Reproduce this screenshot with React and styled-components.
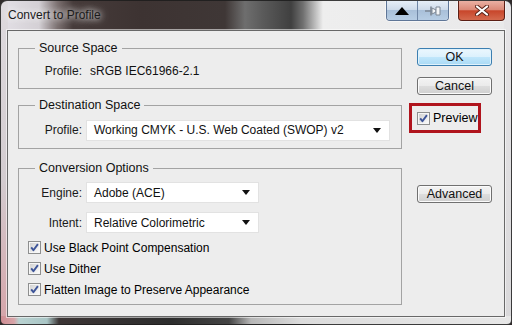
import React from "react";
import styled, { createGlobalStyle } from "styled-components";

const GlobalStyle = createGlobalStyle`
  html, body {
    margin: 0;
    padding: 0;
    background: #2f2a2a;
  }
  body {
    width: 512px;
    height: 325px;
    overflow: hidden;
    font-family: "Liberation Sans", Arial, sans-serif;
    font-size: 12px;
    color: #000;
  }
`;

const Window = styled.div`
  box-sizing: border-box;
  width: 512px;
  height: 325px;
  display: flex;
  flex-direction: column;
  border: 1px solid rgba(28, 28, 28, 0.85);
  border-radius: 7px 7px 5px 5px;
  overflow: hidden;
  background:
    linear-gradient(90deg, #cf8e94 0, #d8a4a8 13px, #b9d2d1 18px, #a9c5c5 46px, #3c3535 58px, #2d2d2d 170px, #444 228px, #b7b7b7 250px, #dcdcdc 300px, #e7e7e7 100%) left bottom / 100% 8px no-repeat,
    linear-gradient(180deg, #dedade 0, #d3ccd0 55%, #d5a3a8 100%) left top / 7px 100% no-repeat,
    linear-gradient(180deg, #e6e5e7, #d9d8da) right top / 7px 100% no-repeat,
    linear-gradient(90deg, #e3e0e6 0, #d4d0d5 38px, #7d7272 56px, #463b3a 72px, #3d3332 140px, #3f3736 224px, #6e6e6e 244px, #5a5a5a 262px, #404040 290px, #707070 302px, #eeeeee 322px, #e9e9ea 100%);
`;

const TitleBar = styled.div`
  height: 29px;
  flex: none;
  display: flex;
  align-items: flex-start;
  padding-left: 7px;
  padding-right: 6px;
`;

const Title = styled.div`
  margin-top: 6px;
  font-size: 12px;
  line-height: 16px;
  color: #1b1b1b;
  text-shadow: 0 0 6px rgba(255, 255, 255, 0.95), 0 0 10px rgba(255, 255, 255, 0.8);
`;

const CaptionGroup = styled.div`
  margin-left: auto;
  display: flex;
  border: 1px solid #5f7697;
  border-top: none;
  border-radius: 0 0 4px 4px;
  overflow: hidden;
  box-shadow: 0 0 0 1px rgba(255, 255, 255, 0.5);
`;

const CaptionButton = styled.div`
  width: 30px;
  height: 19px;
  display: flex;
  align-items: center;
  justify-content: center;
  background: linear-gradient(180deg, #e6eef7 0, #cedbea 45%, #a9c0d9 50%, #b7cde4 100%);
  & + & {
    border-left: 1px solid #6f86a5;
  }
`;

const CloseButton = styled.div`
  width: 45px;
  height: 19px;
  margin-left: 9px;
  display: flex;
  align-items: center;
  justify-content: center;
  border: 1px solid #5b1e14;
  border-top: none;
  border-radius: 0 0 4px 4px;
  background: linear-gradient(180deg, #eab0a3 0, #dc8a78 45%, #c8462b 52%, #d46a4e 100%);
  box-shadow: 0 0 0 1px rgba(255, 255, 255, 0.45);
`;

const Client = styled.div`
  flex: 1;
  margin: 0 6px 7px 6px;
  border: 1px solid #686868;
  box-shadow: 0 0 0 1px rgba(255, 255, 255, 0.55);
  background: #ededed;
  display: flex;
  padding: 10px 12px 0 10px;
  gap: 15px;
`;

const LeftColumn = styled.div`
  width: 384px;
  display: flex;
  flex-direction: column;
`;

const RightColumn = styled.div`
  width: 75px;
  display: flex;
  flex-direction: column;
`;

const Group = styled.fieldset`
  margin: ${(p) => p.$top || 0}px 0 0 0;
  padding: ${(p) => p.$pad || "6px 0 7px 0"};
  border: 1px solid #a3a3a3;
  min-width: 0;
  display: flex;
  flex-direction: column;
`;

const Legend = styled.legend`
  margin-left: 16px;
  padding: 0 4px;
  font-size: 12.5px;
  line-height: 14px;
  color: #111;
`;

const Row = styled.div`
  display: flex;
  align-items: center;
  height: ${(p) => p.$h || 21}px;
  margin-top: ${(p) => p.$mt || 0}px;
  gap: 4px;
`;

const Label = styled.div`
  width: 63px;
  text-align: right;
  color: #1a1a1a;
  white-space: nowrap;
`;

const Value = styled.div`
  padding-left: 4px;
  color: #111;
`;

const Dropdown = styled.div`
  box-sizing: border-box;
  width: ${(p) => p.$w}px;
  height: 21px;
  background: #fff;
  border: 1px solid #e2e2e2;
  display: flex;
  align-items: center;
  justify-content: space-between;
  padding: 0 8px 0 7px;
  color: #111;
  white-space: nowrap;
`;

const CheckRow = styled.div`
  display: flex;
  align-items: center;
  height: 21px;
  padding-left: 9px;
  gap: 3px;
  margin-top: ${(p) => p.$mt || 0}px;
  white-space: nowrap;
`;

const Button = styled.div`
  box-sizing: border-box;
  height: 18px;
  margin-top: ${(p) => p.$mt || 0}px;
  display: flex;
  align-items: center;
  justify-content: center;
  border: 1px solid ${(p) => (p.$primary ? "#3c7fb1" : "#707070")};
  border-radius: 3px;
  box-shadow: inset 0 0 0 1px ${(p) => (p.$primary ? "#dff2fc" : "#fbfbfb")};
  background: ${(p) =>
    p.$primary
      ? "linear-gradient(180deg, #ebf7fe 0, #dcf1fd 48%, #c0e6fb 52%, #a9daf5 100%)"
      : "linear-gradient(180deg, #f3f3f3 0, #ebebeb 48%, #dddddd 52%, #cfcfcf 100%)"};
  font-size: 12.5px;
  color: #111;
`;

const Highlight = styled.div`
  box-sizing: border-box;
  width: 72px;
  height: 30px;
  margin: 8px 0 0 -8px;
  border: 3px solid #b0141d;
  display: flex;
  align-items: center;
  padding-left: 5px;
  gap: 3px;
  font-size: 12.5px;
`;

const Arrow = () => (
  <svg width="8" height="5" viewBox="0 0 8 5">
    <path d="M0 0 H8 L4 5 Z" fill="#111" />
  </svg>
);

const Check = () => (
  <svg width="13" height="13" viewBox="0 0 13 13" style={{ flex: "none" }}>
    <defs>
      <linearGradient id="cbfill" x1="0" y1="0" x2="1" y2="1">
        <stop offset="0" stopColor="#d2d2d2" />
        <stop offset="1" stopColor="#fbfbfb" />
      </linearGradient>
    </defs>
    <rect x="0.5" y="0.5" width="12" height="12" fill="#f6f6f6" stroke="#8e8f8f" />
    <rect x="2" y="2" width="9" height="9" fill="url(#cbfill)" />
    <path d="M3.2 6.4 L5.4 9.2 L9.9 3.1" fill="none" stroke="#3d5498" strokeWidth="1.9" strokeLinejoin="round" />
  </svg>
);

const UpIcon = () => (
  <svg width="14" height="8" viewBox="0 0 14 8">
    <path d="M0 8 L7 0 L14 8 Z" fill="#000" />
  </svg>
);

const PinIcon = () => (
  <svg width="18" height="12" viewBox="0 0 18 12">
    <path d="M1 6 H7" stroke="#7d8794" strokeWidth="1.4" />
    <path d="M7 1.5 V10.5" stroke="#7d8794" strokeWidth="1.6" />
    <path d="M8 3 L12 5 L12 7 L8 9 Z" fill="#f4f6f8" stroke="#7d8794" strokeWidth="1" />
    <path d="M12 2 L16 2 L16 10 L12 10 Z" fill="#f4f6f8" stroke="#7d8794" strokeWidth="1" />
  </svg>
);

const CloseIcon = () => (
  <svg width="14" height="11" viewBox="0 0 14 11">
    <path d="M2 1.5 L12 9.5 M12 1.5 L2 9.5" stroke="#5a2318" strokeWidth="4" strokeLinecap="round" />
    <path d="M2 1.5 L12 9.5 M12 1.5 L2 9.5" stroke="#fff" strokeWidth="2.2" strokeLinecap="round" />
  </svg>
);

const App = () => {
  return (
    <>
      <GlobalStyle />
      <Window>
        <TitleBar>
          <Title>Convert to Profile</Title>
          <CaptionGroup>
            <CaptionButton>
              <UpIcon />
            </CaptionButton>
            <CaptionButton>
              <PinIcon />
            </CaptionButton>
          </CaptionGroup>
          <CloseButton>
            <CloseIcon />
          </CloseButton>
        </TitleBar>

        <Client>
          <LeftColumn>
            <Group>
              <Legend>Source Space</Legend>
              <Row $h={20}>
                <Label>Profile:</Label>
                <Value>sRGB IEC61966-2.1</Value>
              </Row>
            </Group>

            <Group $top={9} $pad="7px 0 7px 0">
              <Legend>Destination Space</Legend>
              <Row $h={22}>
                <Label>Profile:</Label>
                <Dropdown $w={304}>
                  Working CMYK - U.S. Web Coated (SWOP) v2
                  <Arrow />
                </Dropdown>
              </Row>
            </Group>

            <Group $top={12} $pad="7px 0 4px 0">
              <Legend>Conversion Options</Legend>
              <Row>
                <Label>Engine:</Label>
                <Dropdown $w={173}>
                  Adobe (ACE)
                  <Arrow />
                </Dropdown>
              </Row>
              <Row $mt={9}>
                <Label>Intent:</Label>
                <Dropdown $w={173}>
                  Relative Colorimetric
                  <Arrow />
                </Dropdown>
              </Row>
              <CheckRow $mt={4}>
                <Check />
                Use Black Point Compensation
              </CheckRow>
              <CheckRow>
                <Check />
                Use Dither
              </CheckRow>
              <CheckRow>
                <Check />
                Flatten Image to Preserve Appearance
              </CheckRow>
            </Group>
          </LeftColumn>

          <RightColumn>
            <Button $primary $mt={7}>
              OK
            </Button>
            <Button $mt={11}>Cancel</Button>
            <Highlight>
              <Check />
              Preview
            </Highlight>
            <Button $mt={52}>Advanced</Button>
          </RightColumn>
        </Client>
      </Window>
    </>
  );
};

export default App;
